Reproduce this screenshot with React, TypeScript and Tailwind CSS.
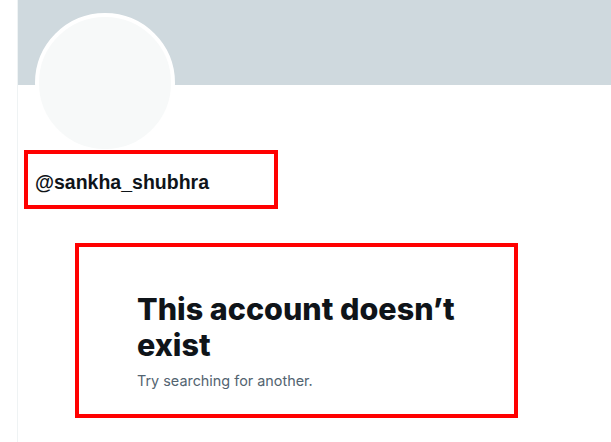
export default function App() {
  return (
    <div className="flex min-h-[442px] bg-white font-['Liberation_Sans',sans-serif]">
      <div className="w-[17px] shrink-0" />

      {/* Profile column */}
      <main className="flex-1 border-l border-[#eff3f4]">
        <div className="h-[85px] bg-[#cfd9de]" />

        <div className="px-[17px]">
          <div className="-mt-[72px] h-[140px] w-[140px] rounded-full border-4 border-white bg-[#f7f9f9]" />
        </div>

        {/* Handle */}
        <div className="ml-[6px] -mt-[3px] h-[59px] w-[254px] border-4 border-[#ff0000] pl-[7px] pt-[16px]">
          <span className="text-[19.5px] font-bold leading-[24px] text-[#0f1419]">@sankha_shubhra</span>
        </div>

        {/* Empty state */}
        <div className="ml-[57px] mt-[34px] h-[175px] w-[443px] border-4 border-[#ff0000] pl-[58px] pt-[44px]">
          <div className="max-w-[336px] font-['Inter',sans-serif]">
            <h2 className="text-[30.5px] font-extrabold leading-[36px] text-[#0f1419]">
              This account doesn’t exist
            </h2>
            <p className="mt-[8px] text-[14.4px] leading-[20px] text-[#536471]">
              Try searching for another.
            </p>
          </div>
        </div>
      </main>
    </div>
  );
}
